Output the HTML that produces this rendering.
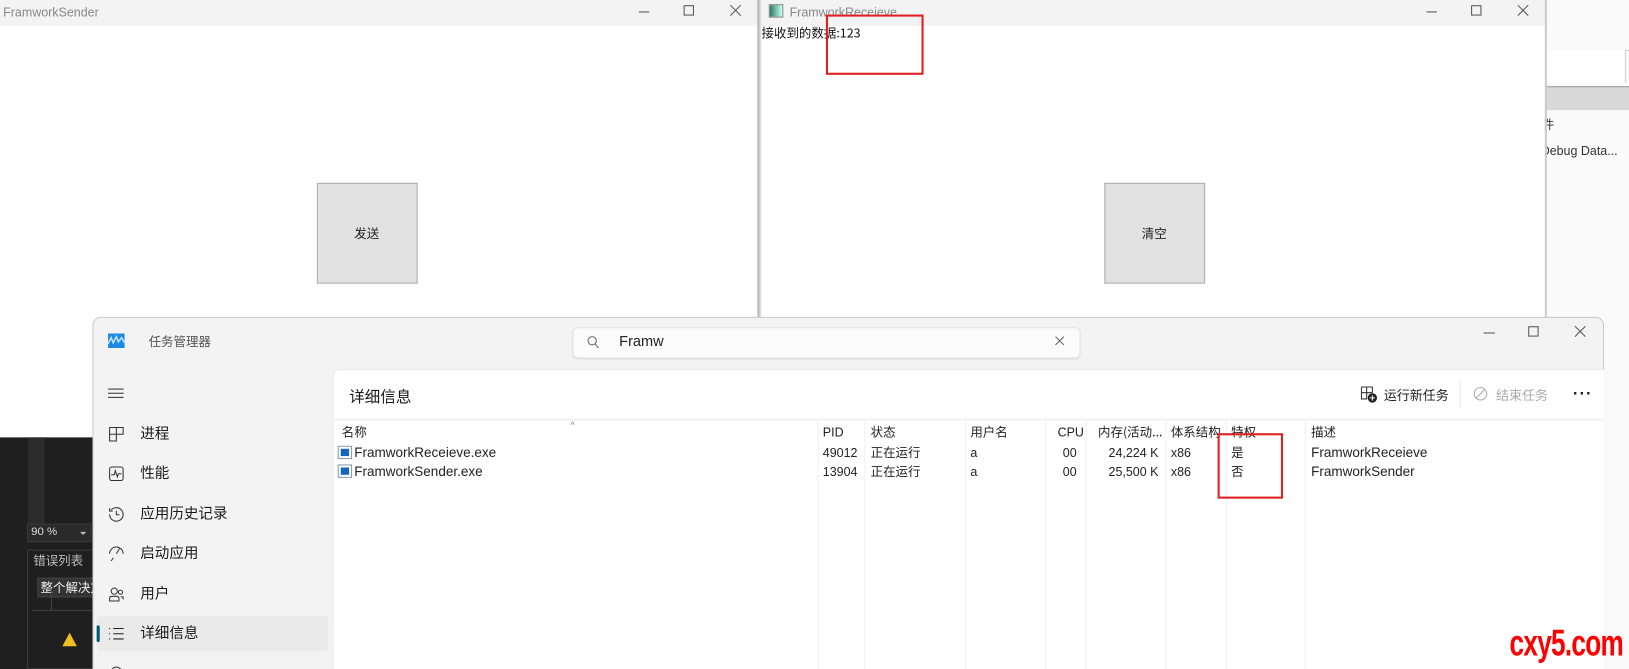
<!DOCTYPE html>
<html><head><meta charset="utf-8">
<style>
*{margin:0;padding:0;box-sizing:border-box}
html,body{width:1629px;height:669px;overflow:hidden;background:#fff}
#s{position:absolute;left:0;top:0;width:1568px;height:644px;transform:scale(1.03890);transform-origin:0 0;font-family:"Liberation Sans","Noto Sans CJK SC",sans-serif;overflow:hidden}
.a{position:absolute}
.t{font-size:12px;color:#222;white-space:nowrap}
.cj{font-family:"Noto Sans CJK SC",sans-serif}
.ctl{position:absolute;font-size:14px;color:#444}
.vl{position:absolute;top:404px;width:1px;height:240px;background:#eef1f4}
.si{position:absolute;left:135px;font-size:14px;color:#1a1a1a;font-family:"Noto Sans CJK SC",sans-serif}
.ic{position:absolute;left:104px;width:16px;height:16px}
</style></head><body><div id="s">
<div class="a" style="left:1487px;top:0;width:81px;height:644px;background:#fafafa"></div>
<div class="a" style="left:1487px;top:48px;width:81px;height:1px;background:#d0d0d0"></div>
<div class="a" style="left:1487px;top:48px;width:78px;height:32px;background:#fff;border-right:1px solid #ccc"></div>
<div class="a" style="left:1487px;top:83px;width:81px;height:23px;background:#d8d8d8;border-top:1px solid #999"></div>
<div class="a t cj" style="left:1484px;top:111px;color:#333">件</div>
<div class="a t" style="left:1483px;top:138px;color:#333">Debug Data...</div>

<div class="a" style="left:0;top:0;width:730px;height:310px;background:#fff"></div>
<div class="a" style="left:0;top:0;width:730px;height:25px;background:#f3f3f3"></div>
<div class="a t" style="left:3px;top:5px;color:#888">FramworkSender</div>
<div class="a" style="left:615px;top:11px;width:10px;height:1px;background:#555"></div>
<div class="a" style="left:658px;top:5px;width:10px;height:10px;border:1px solid #555"></div>
<svg class="a" style="left:702px;top:4px" width="12" height="12"><path d="M1 1L11 11M11 1L1 11" stroke="#555"/></svg>
<div class="a" style="left:305px;top:176px;width:97px;height:97px;background:#e1e1e1;border:1px solid #adadad"></div>
<div class="a t cj" style="left:341px;top:216px">发送</div>
<div class="a" style="left:729px;top:0;width:4px;height:310px;background:linear-gradient(90deg,#aaa,#ccc,#eee)"></div>

<div class="a" style="left:733px;top:0;width:754px;height:310px;background:#fff"></div>
<div class="a" style="left:733px;top:0;width:754px;height:25px;background:#f3f3f3"></div>
<div class="a" style="left:740px;top:4px;width:14px;height:13px;border:1px solid #888;background:linear-gradient(90deg,#2a7a6a,#cfe)"></div>
<div class="a t" style="left:760px;top:5px;color:#888">FramworkReceieve</div>
<div class="a t cj" style="left:733px;top:23px;color:#111">接收到的数据:123</div>
<div class="a" style="left:795px;top:14px;width:94px;height:58px;border:2px solid #e02020"></div>
<div class="a" style="left:1373px;top:11px;width:10px;height:1px;background:#555"></div>
<div class="a" style="left:1416px;top:5px;width:10px;height:10px;border:1px solid #555"></div>
<svg class="a" style="left:1460px;top:4px" width="12" height="12"><path d="M1 1L11 11M11 1L1 11" stroke="#555"/></svg>
<div class="a" style="left:1063px;top:176px;width:97px;height:97px;background:#e1e1e1;border:1px solid #adadad"></div>
<div class="a t cj" style="left:1099px;top:216px">清空</div>
<div class="a" style="left:1487px;top:0;width:2px;height:310px;background:#ccc"></div>

<div class="a" style="left:0;top:421px;width:92px;height:223px;background:#1f1f1f"></div>
<div class="a" style="left:27px;top:421px;width:16px;height:84px;background:#2c2c2c"></div>
<div class="a" style="left:26px;top:504px;width:62px;height:18px;background:#2a2a2a;border:1px solid #3a3a3a"></div>
<div class="a t" style="left:30px;top:506px;color:#ddd;font-size:11px">90 %</div>
<div class="a" style="left:77px;top:512px;border:3px solid transparent;border-top-color:#bbb"></div>
<div class="a" style="left:26px;top:529px;width:66px;height:115px;border:1px solid #3a3a3a"></div>
<div class="a t cj" style="left:32px;top:531px;color:#bbb">错误列表</div>
<div class="a" style="left:36px;top:556px;width:56px;height:19px;background:#333;border:1px solid #444"></div>
<div class="a t cj" style="left:39px;top:557px;color:#eee">整个解决方</div>
<div class="a" style="left:31px;top:587px;width:61px;height:1px;background:#444"></div>
<div class="a" style="left:49px;top:568px;width:1px;height:20px;background:#444"></div>
<div class="a" style="left:60px;top:609px;border:7px solid transparent;border-bottom:13px solid #f0c020;border-top:0"></div>

<div class="a" style="left:89px;top:305px;width:1455px;height:345px;background:#f3f3f3;border:1px solid #c8c8c8;border-radius:8px 8px 0 0"></div>
<svg class="a" style="left:104px;top:321px" width="16" height="14"><rect width="16" height="14" fill="#1e88e5"/><path d="M0 10 L3 4 L5 9 L8 3 L10 8 L13 4 L16 9" stroke="#bfe3ff" stroke-width="1.5" fill="none"/></svg>
<div class="a t cj" style="left:143px;top:320px;color:#555">任务管理器</div>
<div class="a" style="left:551px;top:315px;width:489px;height:30px;background:#fbfbfb;border:1px solid #e3e3e3;border-radius:5px;box-shadow:0 1px 1px #ddd"></div>
<svg class="a" style="left:565px;top:323px" width="12" height="13"><circle cx="5" cy="5" r="4" stroke="#666" fill="none"/><path d="M8 8 L11 12" stroke="#666"/></svg>
<div class="a" style="left:596px;top:320px;font-size:14px;color:#222">Framw</div>
<svg class="a" style="left:1015px;top:323px" width="10" height="10"><path d="M1 1L9 9M9 1L1 9" stroke="#666"/></svg>
<div class="a" style="left:1428px;top:320px;width:11px;height:1px;background:#555"></div>
<div class="a" style="left:1471px;top:314px;width:10px;height:10px;border:1px solid #555"></div>
<svg class="a" style="left:1515px;top:313px" width="12" height="12"><path d="M1 1L11 11M11 1L1 11" stroke="#555"/></svg>

<div class="a" style="left:104px;top:374px;width:15px;height:1px;background:#333;box-shadow:0 4px 0 #333,0 8px 0 #333"></div>
<svg class="ic" style="top:410px"><path d="M1.5 1.5H14.5V8H1.5ZM8 1.5V14.5H1.5V1.5" stroke="#333" fill="none"/></svg>
<div class="si" style="top:407px">进程</div>
<svg class="ic" style="top:448px"><rect x="1.5" y="1.5" width="13" height="13" rx="2" stroke="#333" fill="none"/><path d="M3 9H6L7 5L9 11L10 8H13" stroke="#333" fill="none"/></svg>
<div class="si" style="top:445px">性能</div>
<svg class="ic" style="top:487px"><path d="M3 4A6.5 6.5 0 1 1 1.5 8" stroke="#333" fill="none"/><path d="M1.5 2V5H4.5M8 4.5V8.5H11" stroke="#333" fill="none"/></svg>
<div class="si" style="top:484px">应用历史记录</div>
<svg class="ic" style="top:525px"><path d="M1.5 8A6.5 6.5 0 0 1 14.5 8M8 8L11 3M5 12L3 15" stroke="#333" fill="none"/></svg>
<div class="si" style="top:522px">启动应用</div>
<svg class="ic" style="top:564px"><circle cx="6" cy="5" r="3" stroke="#333" fill="none"/><circle cx="12" cy="6" r="2" stroke="#333" fill="none"/><path d="M1.5 14.5V12Q1.5 10 4 10H8Q10.5 10 10.5 12V14.5ZM12 10.5H14.5V13" stroke="#333" fill="none"/></svg>
<div class="si" style="top:561px">用户</div>
<div class="a" style="left:93px;top:593px;width:223px;height:34px;background:#eaeaea;border-radius:4px"></div>
<div class="a" style="left:93px;top:602px;width:3px;height:16px;background:#005a70;border-radius:2px"></div>
<svg class="ic" style="top:602px"><path d="M1 3H2M1 8H2M1 13H2M5 3H15M5 8H15M5 13H15" stroke="#222" fill="none"/></svg>
<div class="si" style="top:599px">详细信息</div>
<svg class="ic" style="top:639px"><circle cx="8" cy="8" r="5" stroke="#333" fill="none"/></svg>

<div class="a" style="left:320px;top:355px;width:1224px;height:290px;background:#fff;border-top:1px solid #e8e8e8;border-left:1px solid #e8e8e8;border-radius:7px 0 0 0"></div>
<div class="a cj" style="left:336px;top:371px;font-size:15px;color:#1a1a1a">详细信息</div>
<svg class="a" style="left:1309px;top:371px" width="17" height="17"><path d="M1.5 1.5H12V7M1.5 1.5V13H7M6.5 1.5V13M1.5 7H12" stroke="#333" fill="none"/><circle cx="12" cy="12" r="4.5" fill="#222"/><path d="M12 9.5V14.5M9.5 12H14.5" stroke="#fff"/></svg>
<div class="a t cj" style="left:1332px;top:370px;font-size:12.5px">运行新任务</div>
<div class="a" style="left:1405px;top:366px;width:1px;height:27px;background:#e8e8e8"></div>
<svg class="a" style="left:1418px;top:372px" width="14" height="14"><circle cx="7" cy="7" r="6" stroke="#aaa" fill="none"/><path d="M3 11L11 3" stroke="#aaa"/></svg>
<div class="a t cj" style="left:1440px;top:370px;color:#aaa;font-size:12.5px">结束任务</div>
<div class="a" style="left:1514px;top:378px;font-size:16px;font-weight:bold;letter-spacing:1px;color:#222;line-height:4px">···</div>
<div class="a" style="left:320px;top:403px;width:1224px;height:2px;background:#f2f2f2"></div>
<div class="a" style="left:549px;top:404px;font-size:9px;color:#888">^</div>

<div class="vl" style="left:787px"></div><div class="vl" style="left:832px"></div><div class="vl" style="left:929px"></div><div class="vl" style="left:1006px"></div><div class="vl" style="left:1045px"></div><div class="vl" style="left:1122px"></div><div class="vl" style="left:1180px"></div><div class="vl" style="left:1256px"></div>

<div class="a t cj" style="left:329px;top:407px">名称</div>
<div class="a t" style="left:792px;top:409px">PID</div>
<div class="a t cj" style="left:838px;top:407px">状态</div>
<div class="a t cj" style="left:934px;top:407px">用户名</div>
<div class="a t" style="left:1018px;top:409px">CPU</div>
<div class="a t cj" style="left:1046px;top:407px;width:73px;overflow:hidden;text-align:right">内存(活动...</div>
<div class="a t cj" style="left:1127px;top:407px">体系结构</div>
<div class="a t cj" style="left:1185px;top:407px">特权</div>
<div class="a t cj" style="left:1262px;top:407px">描述</div>

<svg class="a" style="left:325px;top:429px" width="14" height="13"><rect x=".5" y=".5" width="13" height="12" fill="#fff" stroke="#7a8ea8"/><rect x="3" y="3" width="8" height="7" fill="#1565c0"/></svg>
<div class="a t" style="left:341px;top:428px;font-size:13px">FramworkReceieve.exe</div>
<svg class="a" style="left:325px;top:447px" width="14" height="13"><rect x=".5" y=".5" width="13" height="12" fill="#fff" stroke="#7a8ea8"/><rect x="3" y="3" width="8" height="7" fill="#1565c0"/></svg>
<div class="a t" style="left:341px;top:446px;font-size:13px">FramworkSender.exe</div>

<div class="a t" style="left:792px;top:429px">49012</div>
<div class="a t" style="left:792px;top:447px">13904</div>
<div class="a t cj" style="left:838px;top:427px">正在运行</div>
<div class="a t cj" style="left:838px;top:445px">正在运行</div>
<div class="a t" style="left:934px;top:429px">a</div>
<div class="a t" style="left:934px;top:447px">a</div>
<div class="a t" style="left:1023px;top:429px">00</div>
<div class="a t" style="left:1023px;top:447px">00</div>
<div class="a t" style="left:1067px;top:429px">24,224 K</div>
<div class="a t" style="left:1067px;top:447px">25,500 K</div>
<div class="a t" style="left:1127px;top:429px">x86</div>
<div class="a t" style="left:1127px;top:447px">x86</div>
<div class="a t cj" style="left:1185px;top:427px">是</div>
<div class="a t cj" style="left:1185px;top:445px">否</div>
<div class="a t" style="left:1262px;top:428px;font-size:13px">FramworkReceieve</div>
<div class="a t" style="left:1262px;top:446px;font-size:13px">FramworkSender</div>
<div class="a" style="left:1172px;top:417px;width:63px;height:63px;border:2px solid #e02020"></div>

<div class="a" style="left:1453px;top:598px;font-size:36px;font-weight:bold;color:#f00;transform:scaleX(0.7);transform-origin:0 0;letter-spacing:-1px">cxy5.com</div>
</div></body></html>
